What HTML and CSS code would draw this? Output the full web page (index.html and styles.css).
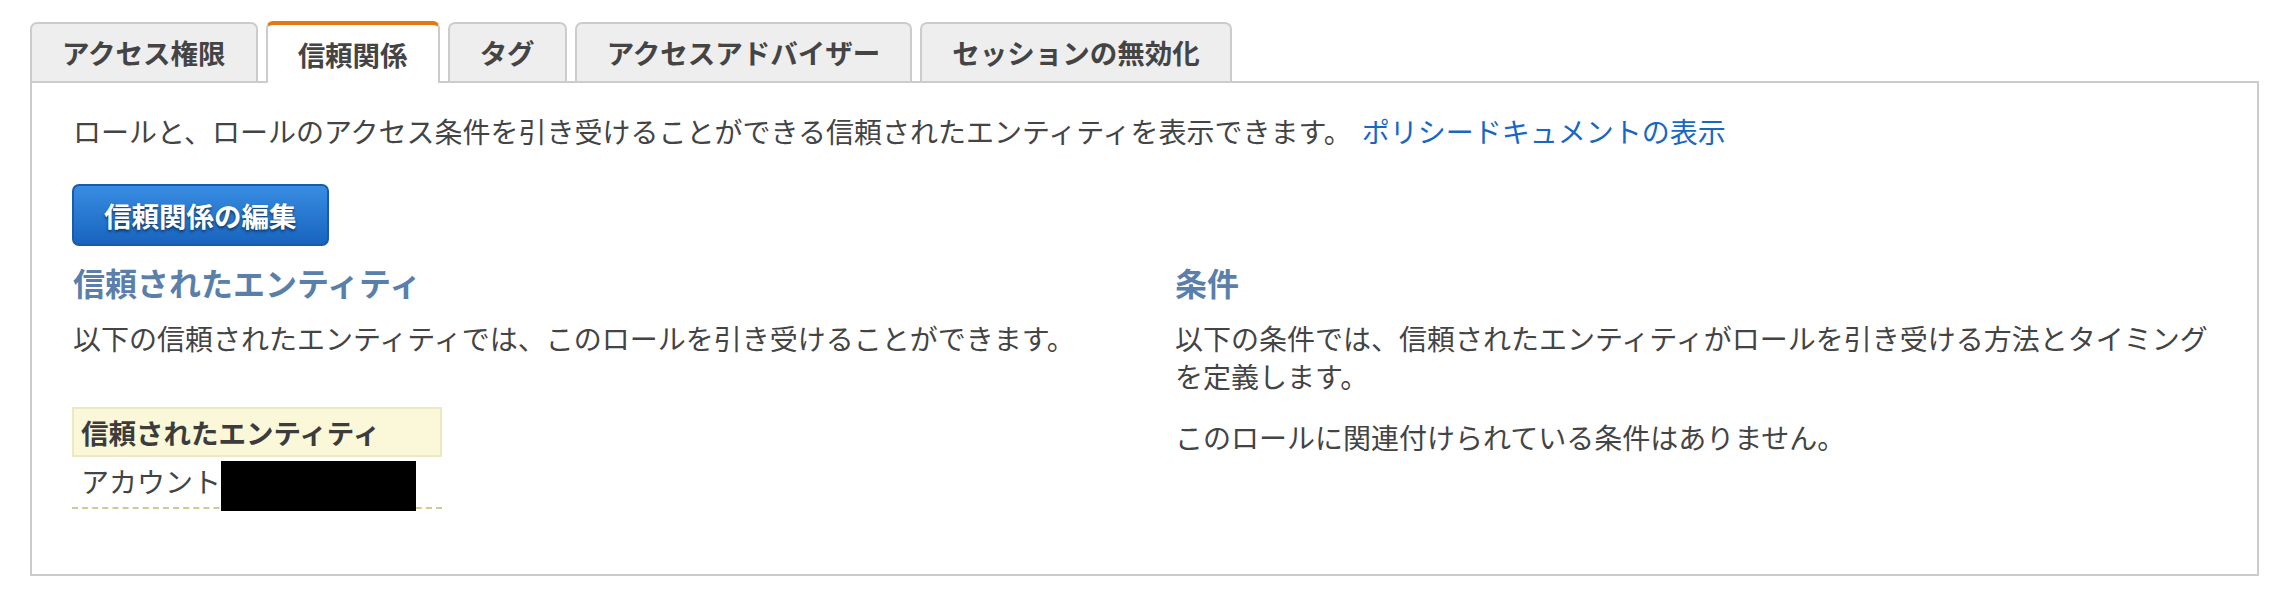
FILE: index.html
```html
<!DOCTYPE html>
<html lang="ja">
<head>
<meta charset="utf-8">
<title>信頼関係</title>
<link rel="stylesheet" href="styles.css">
</head>
<body>
<div class="page">
  <div class="tabs">
    <div class="tab">アクセス権限</div>
    <div class="tab active">信頼関係</div>
    <div class="tab">タグ</div>
    <div class="tab">アクセスアドバイザー</div>
    <div class="tab">セッションの無効化</div>
  </div>
  <div class="panel">
    <p class="intro">ロールと、ロールのアクセス条件を引き受けることができる信頼されたエンティティを表示できます。<a class="link" href="#">ポリシードキュメントの表示</a></p>
    <button class="btn" type="button">信頼関係の編集</button>
    <div class="cols">
      <div class="col">
        <h3 class="heading">信頼されたエンティティ</h3>
        <p class="text">以下の信頼されたエンティティでは、このロールを引き受けることができます。</p>
        <div class="entities">
          <div class="entities-head">信頼されたエンティティ</div>
          <div class="entities-row"><span class="cell-text">アカウント</span><span class="redact"></span></div>
        </div>
      </div>
      <div class="col">
        <h3 class="heading">条件</h3>
        <p class="text">以下の条件では、信頼されたエンティティがロールを引き受ける方法とタイミングを定義します。</p>
        <p class="text">このロールに関連付けられている条件はありません。</p>
      </div>
    </div>
  </div>
</div>
</body>
</html>
```
FILE: styles.css
```css
* { box-sizing: border-box; }
html, body { margin: 0; padding: 0; background: #fff; }
body {
  font-family: "Noto Sans CJK JP", "Noto Sans", sans-serif;
  color: #444;
  font-size: 28px;
}
.page {
  padding: 21px 27px 0 30px;
}
.tabs {
  display: flex;
  align-items: flex-end;
  gap: 8px;
  position: relative;
  z-index: 1;
}
.tab {
  height: 59px;
  line-height: 57px;
  padding: 0 30px;
  border: 2px solid #cccccc;
  border-bottom: none;
  border-radius: 7px 7px 0 0;
  background: #eeeeee;
  font-size: 27.5px;
  font-weight: 700;
  color: #444;
  white-space: nowrap;
}
.tab.active {
  height: 62px;
  margin-bottom: -2px;
  background: #fff;
  border-top: 4px solid #e47911;
  line-height: 58px;
}
.panel {
  border: 2px solid #cccccc;
  padding: 29px 41px 65px 41px;
}
.intro {
  margin: 0;
  line-height: 38px;
  white-space: nowrap;
}
.link {
  color: #1668c4;
  text-decoration: none;
  margin-left: 10px;
}
.btn {
  display: block;
  margin: 34px 0 0 -1px;
  height: 62px;
  padding: 0 30px;
  border: 2px solid #1b5aa8;
  border-radius: 7px;
  background: linear-gradient(#388de2, #1864bf);
  color: #fff;
  font-family: inherit;
  font-size: 27.5px;
  font-weight: 700;
  line-height: 56px;
  text-shadow: 0 2px 3px rgba(0,0,0,0.55);
}
.cols {
  display: grid;
  grid-template-columns: 1102px 1fr;
  margin-top: 16px;
}
.heading {
  margin: 0;
  font-size: 32px;
  line-height: 40px;
  font-weight: 700;
  color: #5a7fab;
}
.text {
  margin: 17px 0 0 0;
  line-height: 38px;
}
.text + .text {
  margin-top: 23px;
}
.entities {
  width: 370px;
  margin: 50px 0 0 -1px;
}
.entities-head {
  height: 50px;
  line-height: 46px;
  padding-left: 7px;
  background: #faf8d8;
  border: 2px solid #ece9c2;
  font-size: 27.5px;
  font-weight: 700;
  color: #3c3c3c;
}
.entities-row {
  display: flex;
  align-items: flex-start;
  height: 52px;
  padding-left: 9px;
  border-bottom: 2px dashed #cfcb94;
}
.cell-text {
  line-height: 48px;
}
.redact {
  flex-shrink: 0;
  width: 195px;
  height: 50px;
  margin-top: 4px;
  background: #000;
}
```
